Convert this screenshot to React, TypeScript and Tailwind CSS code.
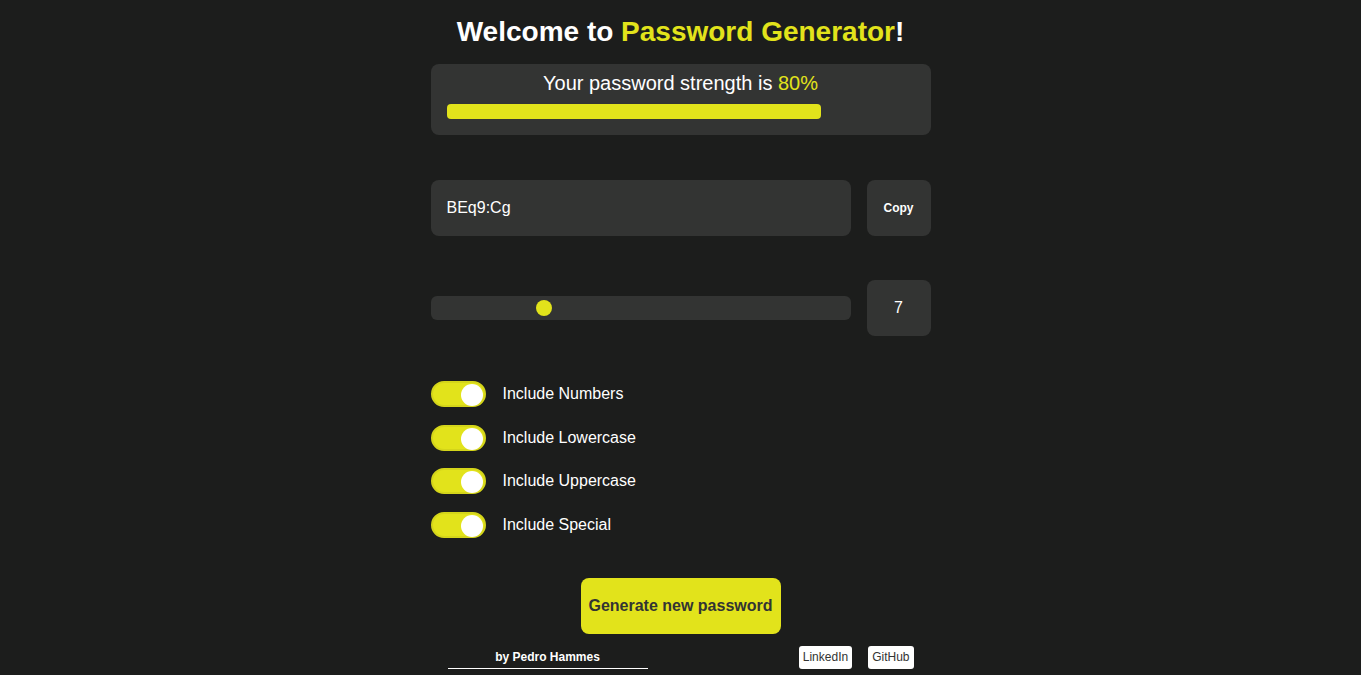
import { useState } from "react";

const FONT = { fontFamily: '"Liberation Sans", Arial, sans-serif' };

type ToggleProps = {
  label: string;
  checked: boolean;
  onChange: (v: boolean) => void;
};

function Toggle({ label, checked, onChange }: ToggleProps) {
  return (
    <label className="flex items-center gap-[17px] cursor-pointer select-none">
      <button
        type="button"
        onClick={() => onChange(!checked)}
        className={`relative w-[55px] h-[26px] rounded-full border-2 ${
          checked ? "bg-[#e2e31b] border-[#d4d51a]" : "bg-[#333433] border-[#333433]"
        }`}
      >
        <span
          className={`absolute top-[1px] w-[22px] h-[22px] rounded-full bg-white ${
            checked ? "right-[1px]" : "left-[1px]"
          }`}
        />
      </button>
      <span className="text-base text-white">{label}</span>
    </label>
  );
}

export default function App() {
  const [length] = useState(7);
  const [opts, setOpts] = useState({ numbers: true, lowercase: true, uppercase: true, special: true });
  const strength = 80;
  const min = 1;
  const max = 24;
  const pct = (length - min) / (max - min);

  return (
    <div className="min-h-screen bg-[#1c1d1c] text-white" style={FONT}>
      <div className="w-[500px] mx-auto pt-[15px] flex flex-col">
        <h1 className="text-[28px] leading-[34px] font-bold text-center text-white mb-[15px]">
          Welcome to <span className="text-[#e2e31b]">Password Generator</span>!
        </h1>

        <div className="bg-[#333433] rounded-lg px-4 pt-[7px] pb-4">
          <p className="text-[20px] leading-6 text-center text-white">
            Your password strength is <span className="text-[#e2e31b]">{strength}%</span>
          </p>
          <div className="mt-[9px] h-[15px]">
            <div className="h-full rounded bg-[#e2e31b]" style={{ width: `${strength}%` }} />
          </div>
        </div>

        <div className="mt-[45px] flex gap-4">
          <div className="flex-1 h-14 rounded-lg bg-[#333433] flex items-center px-4 text-base text-white">
            BEq9:Cg
          </div>
          <button className="w-16 h-14 rounded-lg bg-[#333433] text-xs font-bold text-white">Copy</button>
        </div>

        <div className="mt-[44px] flex gap-4 items-center">
          <div className="flex-1 relative h-6 rounded-md bg-[#333433]">
            <span
              className="absolute top-1 w-4 h-4 rounded-full bg-[#e2e31b]"
              style={{ left: `calc(${pct} * (100% - 16px))` }}
            />
          </div>
          <div className="w-16 h-14 rounded-lg bg-[#333433] flex items-center justify-center text-base text-white">
            {length}
          </div>
        </div>

        <div className="mt-[45px] flex flex-col gap-[17.6px]">
          <Toggle label="Include Numbers" checked={opts.numbers} onChange={(v) => setOpts({ ...opts, numbers: v })} />
          <Toggle label="Include Lowercase" checked={opts.lowercase} onChange={(v) => setOpts({ ...opts, lowercase: v })} />
          <Toggle label="Include Uppercase" checked={opts.uppercase} onChange={(v) => setOpts({ ...opts, uppercase: v })} />
          <Toggle label="Include Special" checked={opts.special} onChange={(v) => setOpts({ ...opts, special: v })} />
        </div>

        <button className="mt-10 mx-auto w-[200px] h-14 rounded-lg bg-[#e2e31b] text-base font-bold text-[#333433]">
          Generate new password
        </button>

        <div className="mt-3 px-[17px] flex items-start justify-between">
          <div className="w-[200px] border-b border-white text-center text-xs font-bold leading-[22px]">
            by Pedro Hammes
          </div>
          <div className="flex gap-4">
            <a className="bg-white text-[#333433] text-xs rounded-[3px] px-1 h-[23px] flex items-center">LinkedIn</a>
            <a className="bg-white text-[#333433] text-xs rounded-[3px] px-1 h-[23px] flex items-center">GitHub</a>
          </div>
        </div>
      </div>
    </div>
  );
}
